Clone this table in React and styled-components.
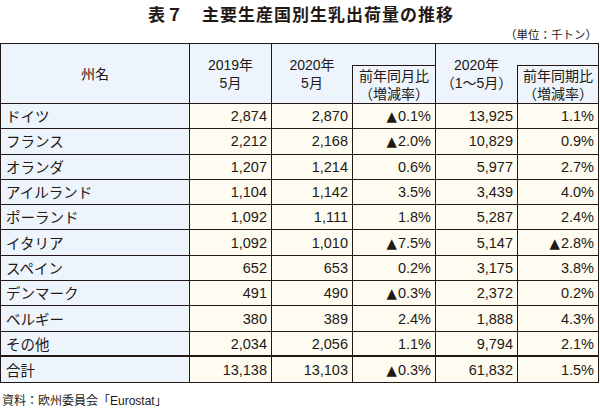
import React from 'react';
import styled, { createGlobalStyle } from 'styled-components';

const GlobalStyle = createGlobalStyle`
  body {
    margin: 0;
    background: #fff;
    font-family: "Liberation Sans", "Noto Sans CJK JP", sans-serif;
    color: #231815;
  }
`;

const Page = styled.div`
  width: 600px;
  height: 408px;
  overflow: hidden;
`;

const Title = styled.h1`
  margin: 0;
  padding-top: 2px;
  height: 24px;
  font-family: "Noto Sans CJK JP", sans-serif;
  font-size: 17px;
  font-weight: bold;
  line-height: 24px;
  text-align: center;
  letter-spacing: 1px;
  padding-left: 2px;
`;

const Unit = styled.div`
  height: 16px;
  margin-bottom: 1px;
  padding-right: 3px;
  font-family: "Noto Sans CJK JP", sans-serif;
  font-size: 11.5px;
  line-height: 16px;
  text-align: right;
`;

const Table = styled.table`
  border-collapse: collapse;
  table-layout: fixed;
  width: 598px;
  margin-left: 0;
  font-size: 14.5px;
`;

const HeadCell = styled.th`
  background: #edf4fc;
  font-weight: normal;
  font-family: "Liberation Sans", "Noto Sans CJK JP", sans-serif;
  font-size: 14px;
  line-height: 18px;
  text-align: center;
  vertical-align: middle;
  padding: 0;
  border-top: 1px solid #231815;
  border-bottom: 1px solid #231815;
  border-left: ${(p) => (p.$noLeft ? 'none' : '1px solid #231815')};
  border-right: ${(p) => (p.$noRight ? 'none' : '1px solid #231815')};
`;

const Row = styled.tr`
  height: ${(p) => (p.$total ? '26px' : '25.3px')};
`;

const NameCell = styled.td`
  background: #edf4fc;
  font-family: "Noto Sans CJK JP", sans-serif;
  font-size: 14.5px;
  padding: 0 0 0 5px;
  line-height: 18px;
  border: 1px solid #231815;
  border-top: ${(p) => (p.$total ? '2px' : '1px')} solid #231815;
`;

const NumCell = styled.td`
  background: #fefcf0;
  text-align: right;
  padding: 0 4px 0 0;
  line-height: 18px;
  white-space: nowrap;
  border: 1px solid #231815;
  border-top: ${(p) => (p.$total ? '2px' : '1px')} solid #231815;
`;

const Tri = styled.span`
  font-family: "DejaVu Sans", sans-serif;
  font-size: 13.5px;
  margin-right: 1px;
`;

const Source = styled.div`
  margin-top: 11px;
  padding-left: 2px;
  font-family: "Liberation Sans", "Noto Sans CJK JP", sans-serif;
  font-size: 12px;
  line-height: 15px;
`;

const rows = [
  ['ドイツ', '2,874', '2,870', '▲0.1%', '13,925', '1.1%'],
  ['フランス', '2,212', '2,168', '▲2.0%', '10,829', '0.9%'],
  ['オランダ', '1,207', '1,214', '0.6%', '5,977', '2.7%'],
  ['アイルランド', '1,104', '1,142', '3.5%', '3,439', '4.0%'],
  ['ポーランド', '1,092', '1,111', '1.8%', '5,287', '2.4%'],
  ['イタリア', '1,092', '1,010', '▲7.5%', '5,147', '▲2.8%'],
  ['スペイン', '652', '653', '0.2%', '3,175', '3.8%'],
  ['デンマーク', '491', '490', '▲0.3%', '2,372', '0.2%'],
  ['ベルギー', '380', '389', '2.4%', '1,888', '4.3%'],
  ['その他', '2,034', '2,056', '1.1%', '9,794', '2.1%'],
  ['合計', '13,138', '13,103', '▲0.3%', '61,832', '1.5%'],
];

function Value({ text }) {
  if (text.startsWith('▲')) {
    return (
      <>
        <Tri>▲</Tri>
        {text.slice(1)}
      </>
    );
  }
  return text;
}

export default function App() {
  return (
    <Page>
      <GlobalStyle />
      <Title>表７　主要生産国別生乳出荷量の推移</Title>
      <Unit>（単位：千トン）</Unit>
      <Table>
        <colgroup>
          <col style={{ width: 189 }} />
          <col style={{ width: 82 }} />
          <col style={{ width: 81 }} />
          <col style={{ width: 83 }} />
          <col style={{ width: 82 }} />
          <col style={{ width: 81 }} />
        </colgroup>
        <thead>
          <tr style={{ height: 22 }}>
            <HeadCell rowSpan={2}>州名</HeadCell>
            <HeadCell rowSpan={2}>
              2019年
              <br />
              5月
            </HeadCell>
            <HeadCell rowSpan={2} $noRight>
              2020年
              <br />
              5月
            </HeadCell>
            <HeadCell $noLeft />
            <HeadCell rowSpan={2} $noRight>
              2020年
              <br />
              （1～5月）
            </HeadCell>
            <HeadCell $noLeft />
          </tr>
          <tr style={{ height: 38 }}>
            <HeadCell>
              前年同月比
              <br />
              （増減率）
            </HeadCell>
            <HeadCell>
              前年同期比
              <br />
              （増減率）
            </HeadCell>
          </tr>
        </thead>
        <tbody>
          {rows.map((r, i) => {
            const total = i === rows.length - 1;
            return (
              <Row key={r[0]} $total={total}>
                <NameCell $total={total}>{r[0]}</NameCell>
                {r.slice(1).map((v, j) => (
                  <NumCell key={j} $total={total}>
                    <Value text={v} />
                  </NumCell>
                ))}
              </Row>
            );
          })}
        </tbody>
      </Table>
      <Source>資料：欧州委員会「Eurostat」</Source>
    </Page>
  );
}
